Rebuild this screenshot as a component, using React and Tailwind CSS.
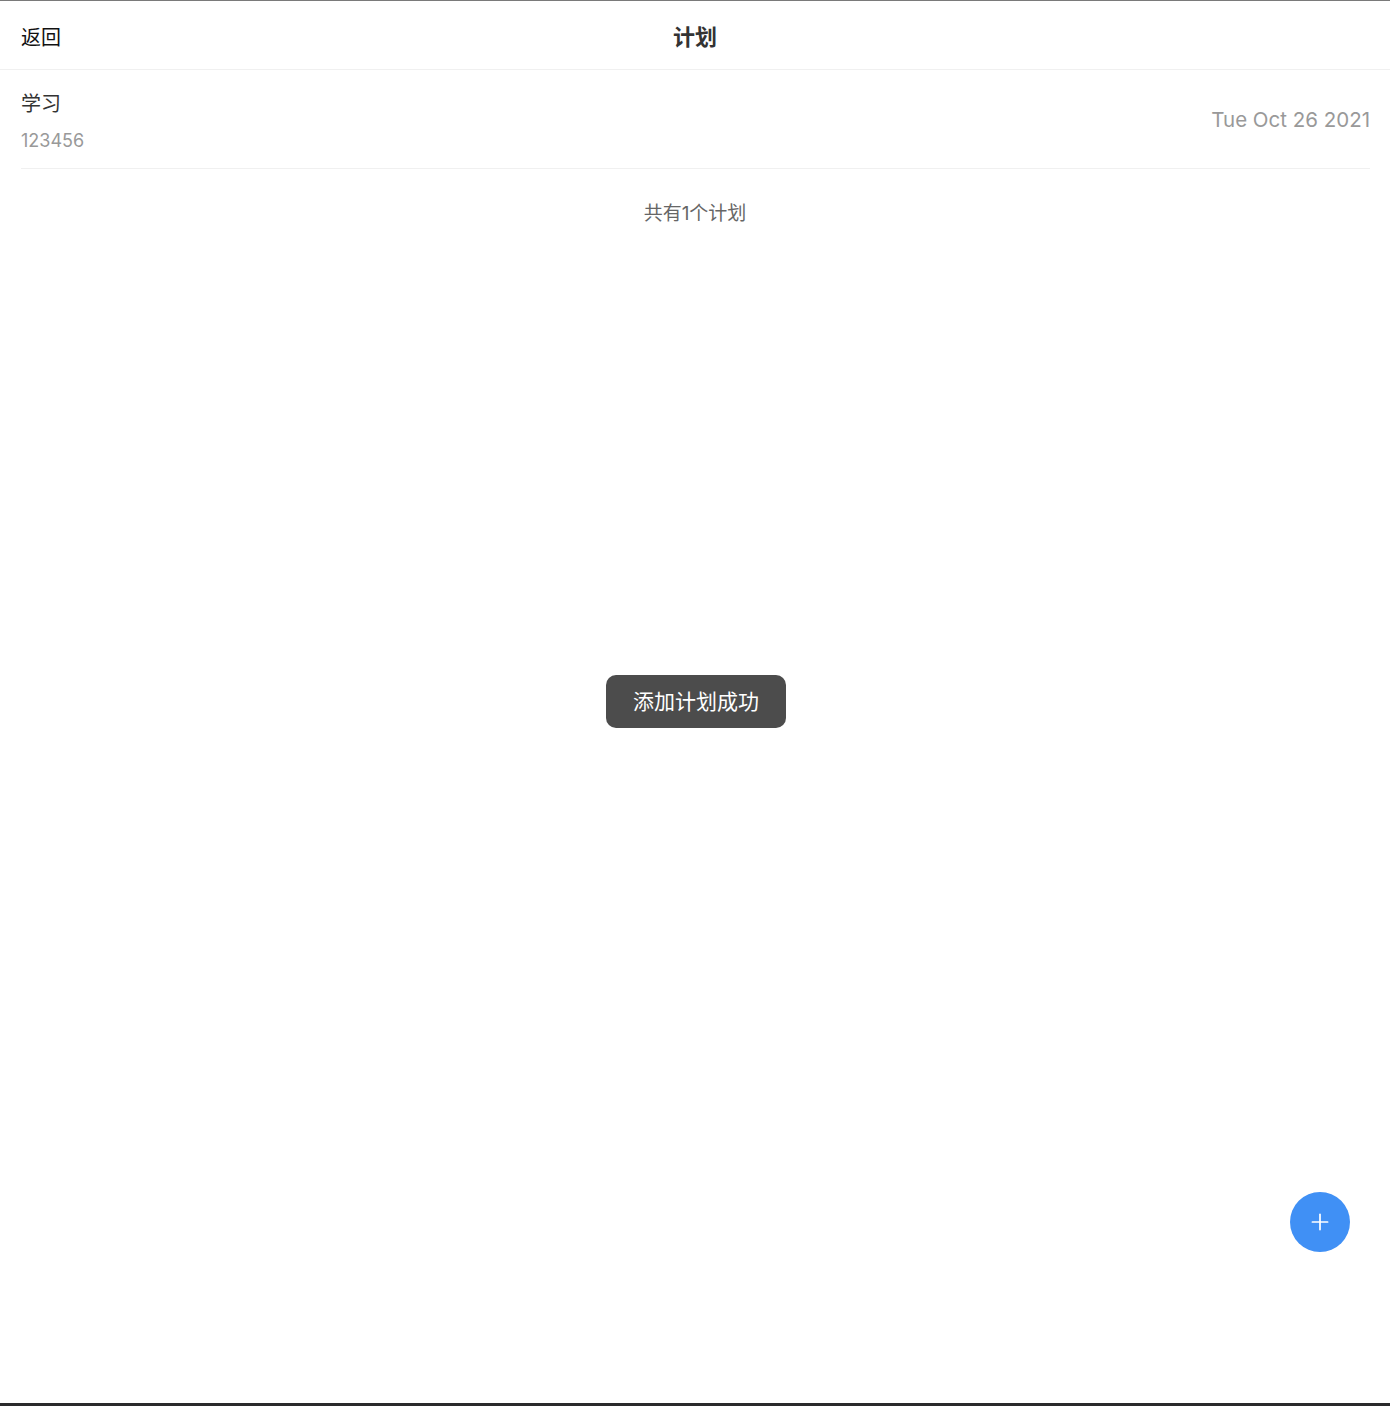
import { Plus } from 'lucide-react';

const font = { fontFamily: 'Inter, "Noto Sans CJK SC", sans-serif' };

export default function App() {
  return (
    <div className="relative flex h-[1406px] flex-col bg-white" style={font}>
      <div className="h-px bg-[#7a7a7a]" />

      <header className="relative flex h-[69px] items-center border-b border-[#f0f0f0] px-[21px] pt-[5px]">
        <span className="text-[20px] text-[#111]">返回</span>
        <h1 className="absolute left-1/2 top-[2px] flex h-full -translate-x-1/2 items-center text-[22px] font-bold text-[#333]">计划</h1>
      </header>

      <ul className="pl-[21px] pr-[20px]">
        <li className="flex items-center justify-between border-b border-[#f0f0f0] pt-[20px] pb-[15px]">
          <div className="flex flex-col gap-[11px]">
            <span className="text-[20px] leading-[28px] text-[#333]">学习</span>
            <span className="text-[18px] leading-[24px] text-[#999]">123456</span>
          </div>
          <span className="mt-[-2px] text-[20.5px] text-[#999]">Tue Oct 26 2021</span>
        </li>
      </ul>

      <p className="mt-[32px] text-center text-[19px] leading-[26px] text-[#666]">共有1个计划</p>

      <div className="flex-1" />
      <div className="h-[3px] bg-[#2a2a2c]" />

      <div className="absolute left-[606px] top-[675px] flex h-[53px] w-[180px] items-center justify-center rounded-[10px] bg-[#4c4c4c] text-[21px] text-white">
        添加计划成功
      </div>

      <button className="absolute left-[1290px] top-[1192px] flex h-[60px] w-[60px] items-center justify-center rounded-full bg-[#4090f5] text-white">
        <Plus size={26} strokeWidth={1.6} />
      </button>
    </div>
  );
}
